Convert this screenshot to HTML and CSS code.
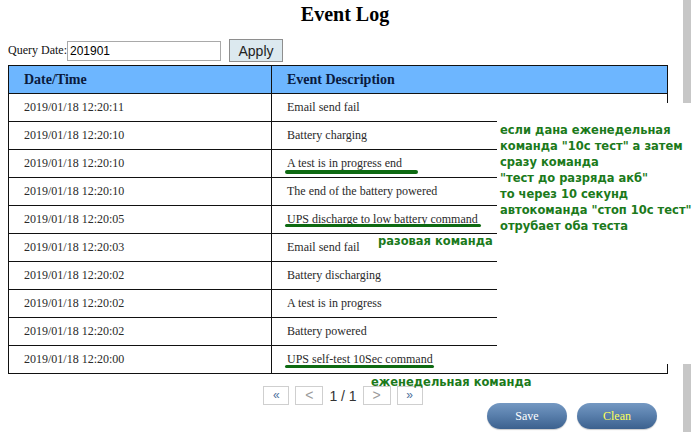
FILE: index.html
```html
<!DOCTYPE html>
<html lang="ru">
<head>
<meta charset="utf-8">
<title>Event Log</title>
<link rel="stylesheet" href="styles.css">
</head>
<body>
<div class="page">
  <h1 class="title">Event Log</h1>
  <div class="query">
    <label class="query-label" for="qd">Query Date:</label><input id="qd" class="query-input" type="text" value="201901"><button class="apply" type="button">Apply</button>
  </div>
  <table class="log">
    <colgroup><col class="col-time"><col class="col-desc"></colgroup>
    <thead>
      <tr><th>Date/Time</th><th>Event Description</th></tr>
    </thead>
    <tbody>
      <tr><td>2019/01/18 12:20:11</td><td>Email send fail</td></tr>
      <tr><td>2019/01/18 12:20:10</td><td>Battery charging</td></tr>
      <tr><td>2019/01/18 12:20:10</td><td>A test is in progress end</td></tr>
      <tr><td>2019/01/18 12:20:10</td><td>The end of the battery powered</td></tr>
      <tr><td>2019/01/18 12:20:05</td><td>UPS discharge to low battery command</td></tr>
      <tr><td>2019/01/18 12:20:03</td><td>Email send fail</td></tr>
      <tr><td>2019/01/18 12:20:02</td><td>Battery discharging</td></tr>
      <tr><td>2019/01/18 12:20:02</td><td>A test is in progress</td></tr>
      <tr><td>2019/01/18 12:20:02</td><td>Battery powered</td></tr>
      <tr><td>2019/01/18 12:20:00</td><td>UPS self-test 10Sec command</td></tr>
    </tbody>
  </table>
  <div class="pager">
    <button class="pg pg-first" type="button">&laquo;</button>
    <button class="pg pg-prev" type="button">&lt;</button>
    <span class="pg-count">1 / 1</span>
    <button class="pg pg-next" type="button">&gt;</button>
    <button class="pg pg-last" type="button">&raquo;</button>
  </div>
  <div class="actions">
    <button class="btn btn-save" type="button">Save</button>
    <button class="btn btn-clean" type="button">Clean</button>
  </div>
</div>

<div class="scrollbar"></div>

<div class="note">
  <p>если дана еженедельная</p>
  <p>команда "10с тест" а затем</p>
  <p>сразу команда</p>
  <p>"тест до разряда акб"</p>
  <p>то через 10 секунд</p>
  <p>автокоманда "стоп 10с тест"</p>
  <p>отрубает оба теста</p>
</div>

<div class="tag tag-once">разовая команда</div>
<div class="tag tag-weekly">еженедельная команда</div>

<div class="stroke stroke-1"></div>
<div class="stroke stroke-2"></div>
<div class="stroke stroke-3"></div>
</body>
</html>
```

FILE: styles.css
```css
html, body {
  margin: 0;
  padding: 0;
}

body {
  position: relative;
  width: 696px;
  height: 435px;
  overflow: hidden;
  background: #ffffff;
  font-family: "Liberation Serif", "Times New Roman", serif;
  color: #000;
}

.page {
  width: 674px;
  padding: 0 8px;
}

.title {
  margin: 2px 0 0;
  font-size: 20px;
  line-height: 24px;
  font-weight: bold;
  text-align: center;
}

.query {
  display: flex;
  align-items: center;
  height: 23px;
  margin-top: 13px;
}

.query-label {
  font-size: 12px;
  width: 59px;
  color: #111;
}

.query-input {
  box-sizing: border-box;
  width: 154px;
  height: 20px;
  margin: 0;
  padding: 0 2px;
  border: 1px solid #a9a9a9;
  font-family: "Liberation Sans", Arial, sans-serif;
  font-size: 12px;
  color: #000;
}

.apply {
  box-sizing: border-box;
  width: 54px;
  height: 23px;
  margin: 0 0 0 8px;
  padding: 0;
  border: 1px solid #8e8e8e;
  background: #dce9ef;
  font-family: "Liberation Sans", Arial, sans-serif;
  font-size: 14px;
  color: #222;
}

.log {
  margin-top: 3px;
  width: 660px;
  border-collapse: collapse;
  table-layout: fixed;
}

.col-time {
  width: 263px;
}

.log th,
.log td {
  box-sizing: border-box;
  height: 28px;
  padding: 0 0 0 15px;
  border: 1px solid #111;
  text-align: left;
  vertical-align: middle;
  white-space: nowrap;
}

.log th {
  background: #6db6ff;
  color: #0a1a3d;
  font-size: 14px;
  font-weight: bold;
}

.log td {
  font-size: 12px;
  color: #2a2a2a;
}

.pager {
  display: flex;
  justify-content: center;
  align-items: center;
  gap: 6px;
  height: 19px;
  margin-top: 12px;
  padding-right: 4px;
}

.pg {
  box-sizing: border-box;
  height: 19px;
  margin: 0;
  padding: 0;
  border: 1px solid #cfcfcf;
  background: #ffffff;
  font-family: "Liberation Sans", Arial, sans-serif;
  line-height: 17px;
}

.pg-first,
.pg-last {
  width: 26px;
  font-size: 12px;
  color: #4d6f9c;
}

.pg-prev,
.pg-next {
  width: 28px;
  font-size: 14px;
  color: #9a9a9a;
}

.pg-count {
  font-family: "Liberation Sans", Arial, sans-serif;
  font-size: 14px;
  color: #333;
}

.actions {
  display: flex;
  justify-content: flex-end;
  gap: 10px;
  margin-top: -2px;
  padding-right: 25px;
}

.btn {
  width: 80px;
  height: 26px;
  margin: 0;
  padding: 0;
  border: none;
  border-radius: 13px;
  background: linear-gradient(#7498c2 0%, #5a80ad 45%, #3c618e 100%);
  box-shadow: 0 1px 1px rgba(0, 0, 0, 0.2);
  font-family: "Liberation Serif", "Times New Roman", serif;
  font-size: 12px;
}

.btn-save {
  color: #ffffff;
}

.btn-clean {
  color: #ffff5a;
}

/* page scrollbar */
.scrollbar {
  position: absolute;
  left: 683px;
  top: 0;
  width: 8px;
  height: 432px;
  background: #c7c7c7;
}

/* annotation overlays */
.note {
  position: absolute;
  left: 497px;
  top: 103px;
  width: 199px;
  height: 261px;
  box-sizing: border-box;
  padding: 19px 0 0 3px;
  background: #ffffff;
  font-family: "DejaVu Sans", Verdana, sans-serif;
  font-size: 11.5px;
  font-weight: bold;
  line-height: 16px;
  color: #1b7a1b;
  white-space: nowrap;
}

.note p {
  margin: 0;
}

.tag {
  position: absolute;
  font-family: "DejaVu Sans", Verdana, sans-serif;
  font-size: 11.5px;
  font-weight: bold;
  line-height: 16px;
  color: #1b7a1b;
  white-space: nowrap;
}

.tag-once {
  left: 378px;
  top: 233px;
}

.tag-weekly {
  left: 371px;
  top: 374px;
}

.stroke {
  position: absolute;
  height: 4px;
  border-radius: 2px;
  background: #0e6a12;
}

.stroke-1 {
  left: 285px;
  top: 170px;
  width: 133px;
}

.stroke-2 {
  left: 285px;
  top: 224px;
  width: 196px;
  height: 3px;
}

.stroke-3 {
  left: 285px;
  top: 365px;
  width: 149px;
  height: 3px;
}
```
